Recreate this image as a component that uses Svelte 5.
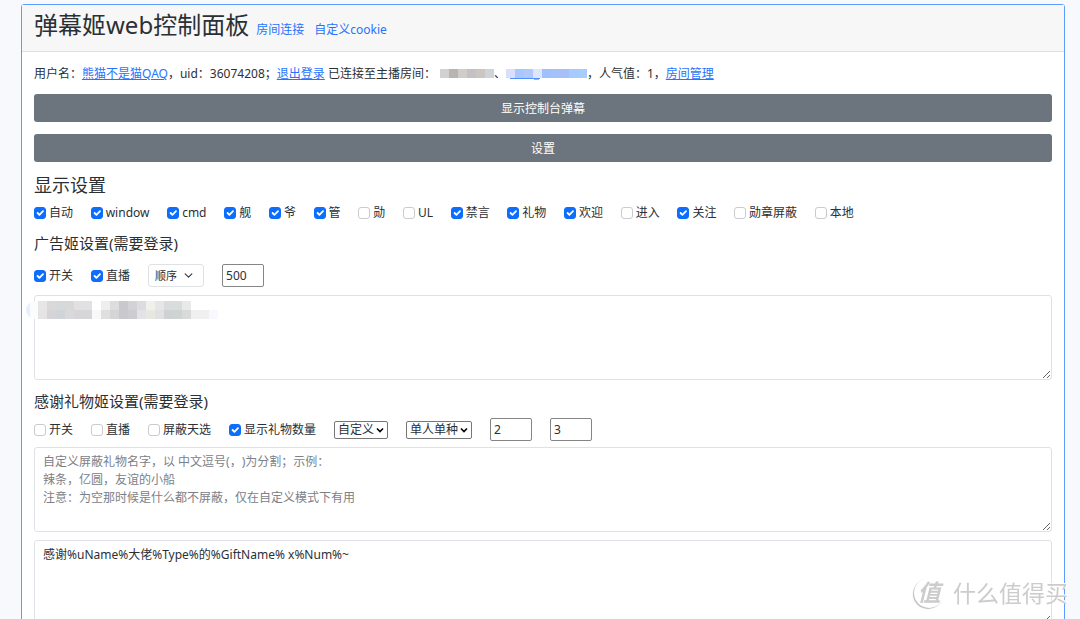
<script>
  const displayOptions = [
    { label: '自动', checked: true },
    { label: 'window', checked: true },
    { label: 'cmd', checked: true },
    { label: '舰', checked: true },
    { label: '爷', checked: true },
    { label: '管', checked: true },
    { label: '勋', checked: false },
    { label: 'UL', checked: false },
    { label: '禁言', checked: true },
    { label: '礼物', checked: true },
    { label: '欢迎', checked: true },
    { label: '进入', checked: false },
    { label: '关注', checked: true },
    { label: '勋章屏蔽', checked: false },
    { label: '本地', checked: false },
  ];

  const advertOptions = [
    { label: '开关', checked: true },
    { label: '直播', checked: true },
  ];

  const giftOptions = [
    { label: '开关', checked: false },
    { label: '直播', checked: false },
    { label: '屏蔽天选', checked: false },
    { label: '显示礼物数量', checked: true },
  ];

  // Masked texts, 9px cells, one array per row of cells
  const roomMask = [
    ['#d2d1d1', '#b8b4b2', '#cfccca', '#c3c1c3', '#ccc6c3', '#d0d3d8'],
  ];
  const hostMask = [
    ['#dcdffc', '#a9c6fd', '#b1c8fd', '#dde6fd', '#9fc0fd', '#a5c1fb', '#a6bffb', '#a6c9ff', '#a8ccff'],
  ];
  const advertMask = [
    ['#e6e6e7', '#dad8d9', '#d6d9da', '#d9d8d9', '#e2e1e2', '#e2e1e2', '#ffffff', '#efeeef', '#dddcde', '#cac8cc', '#d3d2d6', '#dcdce0', '#f0f0ec', '#e6e6e7', '#d9dbdc', '#d8dcdb', '#e8e9e9', '#ffffff', '#ffffff', '#ffffff'],
    ['#e5e4e5', '#d6d4d6', '#cfd4d7', '#d9d8da', '#d6d5d7', '#d6d5d7', '#f8f8f8', '#e0dfe0', '#d5d4d7', '#c9c8cc', '#cdccd3', '#e2e3e6', '#e8e8e2', '#e0e1e3', '#ced2d3', '#d0d3d3', '#d9dada', '#f0f0f0', '#f0f0f0', '#f8f9fe'],
  ];

  const blockPlaceholder = `自定义屏蔽礼物名字，以 中文逗号(，)为分割；示例：
辣条，亿圆，友谊的小船
注意：为空那时候是什么都不屏蔽，仅在自定义模式下有用`;

  let showConsole = $state(false);
  let showSettings = $state(true);
  let interval = $state('500');
  let giftDelay = $state('2');
  let giftCount = $state('3');
  let advertText = $state('');
  let blockedGifts = $state('');
  let thanksText = $state('感谢%uName%大佬%Type%的%GiftName% x%Num%~');
</script>

{#snippet checks(items)}
  {#each items as item}
    <label class="check">
      <input type="checkbox" bind:checked={item.checked} />
      <span>{item.label}</span>
    </label>
  {/each}
{/snippet}

{#snippet mask(rows, underline = false)}
  <svg
    class="mask"
    width={rows[0].length * 9}
    height={rows.length * 9}
    shape-rendering="crispEdges"
    aria-hidden="true"
  >
    {#each rows as row, y}
      {#each row as color, x}
        <rect x={x * 9} y={y * 9} width="9" height="9" fill={color} />
      {/each}
    {/each}
    {#if underline}
      <rect x="4" y="9" width="30" height="1" fill="#4d90fe" />
      <rect x="28" y="10" width="5" height="1" fill="#8db6fd" />
    {/if}
  </svg>
{/snippet}

<main class="card">
  <header class="card-header">
    <h1>弹幕姬web控制面板</h1>
    <nav>
      <a href="#room">房间连接</a>
      <a href="#cookie">自定义cookie</a>
    </nav>
  </header>

  <div class="card-body">
    <p class="status">
      用户名：<a href="#user">熊猫不是猫QAQ</a>，uid：36074208；<a href="#logout">退出登录</a>
      已连接至主播房间：<span class="masked-room">{@render mask(roomMask)}</span>、<a href="#host" aria-label="主播">{@render mask(hostMask, true)}</a>，人气值：1，<a href="#manage">房间管理</a>
    </p>

    <button type="button" class="bar" onclick={() => (showConsole = !showConsole)}>显示控制台弹幕</button>
    <button type="button" class="bar" onclick={() => (showSettings = !showSettings)}>设置</button>

    {#if showSettings}
      <h2>显示设置</h2>
      <div class="row display">
        {@render checks(displayOptions)}
      </div>

      <h3>广告姬设置(需要登录)</h3>
      <div class="row controls advert">
        {@render checks(advertOptions)}
        <select class="form-select" aria-label="发送顺序">
          <option>顺序</option>
          <option>随机</option>
        </select>
        <input class="number" type="text" aria-label="间隔" bind:value={interval} />
      </div>
      <div class="field">
        <textarea aria-label="广告内容" bind:value={advertText}></textarea>
        <div class="masked-text">{@render mask(advertMask)}</div>
      </div>

      <h3>感谢礼物姬设置(需要登录)</h3>
      <div class="row controls">
        {@render checks(giftOptions)}
        <select class="plain-select" aria-label="屏蔽模式">
          <option>自定义</option>
        </select>
        <select class="plain-select wide" aria-label="统计模式">
          <option>单人单种</option>
        </select>
        <input class="number" type="text" aria-label="延迟" bind:value={giftDelay} />
        <input class="number" type="text" aria-label="数量" bind:value={giftCount} />
      </div>
      <textarea aria-label="屏蔽礼物" placeholder={blockPlaceholder} bind:value={blockedGifts}></textarea>
      <textarea aria-label="感谢语" bind:value={thanksText}></textarea>
    {/if}
  </div>
</main>

<div class="watermark" aria-hidden="true">
  <span class="watermark-logo">值</span>
  <span>什么值得买</span>
</div>

<style>
  :global(html) {
    scrollbar-width: none;
  }

  :global(body) {
    background: #f8f9fc;
    color: #2b3035;
    font-family: 'Noto Sans', 'Noto Sans CJK SC', sans-serif;
    font-size: 12px;
    line-height: 18px;
    text-spacing-trim: space-all;
  }

  .card {
    margin: 4px 15px 12px 21px;
    background: #fff;
    border: 1px solid #5c9dff;
    border-radius: 3px;
  }

  .card-header {
    display: flex;
    align-items: baseline;
    gap: 7px;
    padding: 4px 12px 10px;
    background: #f7f7f7;
    border-bottom: 1px solid #dfdfdf;
  }

  .card-header nav {
    display: flex;
    gap: 10px;
  }

  .card-header a {
    text-decoration: none;
  }

  .card-body {
    padding: 12px;
  }

  a {
    color: #2673fd;
    text-underline-offset: 1px;
  }

  h1,
  h2,
  h3 {
    margin: 0;
    font-weight: 400;
  }

  h1 {
    font-size: 24px;
    line-height: 32px;
  }

  h2 {
    margin-bottom: 8px;
    font-size: 18px;
    line-height: 22px;
  }

  h3 {
    margin: 12px 0 8px;
    font-size: 15px;
    line-height: 18px;
  }

  .status {
    margin: 0;
    padding: 1px 0 11px;
  }

  .masked-room {
    margin-left: 4px;
  }

  .mask {
    overflow: visible;
    vertical-align: baseline;
  }

  .bar {
    display: block;
    width: 100%;
    height: 28px;
    margin-bottom: 12px;
    padding: 2px 0 0;
    border: 0;
    border-radius: 3px;
    background: #6c757d;
    color: #fff;
    font: inherit;
    cursor: pointer;
  }

  .row {
    display: flex;
    flex-wrap: wrap;
    align-items: center;
    gap: 0 18px;
  }

  .display {
    justify-content: space-between;
    gap: 0 8px;
    max-width: 820px;
  }

  .controls {
    min-height: 23px;
    margin-bottom: 6px;
  }

  .advert {
    margin: 12px 0 8px;
  }

  .check {
    display: flex;
    align-items: center;
    gap: 3px;
  }

  .check input {
    width: 12px;
    height: 12px;
    margin: 0;
    appearance: none;
    border: 1px solid #c9cbce;
    border-radius: 3px;
    background: #fff;
  }

  .check input:checked {
    border-color: #0d6efd;
    background: #0d6efd url("data:image/svg+xml,%3csvg xmlns='http://www.w3.org/2000/svg' viewBox='0 0 20 20'%3e%3cpath fill='none' stroke='%23fff' stroke-linecap='round' stroke-linejoin='round' stroke-width='3' d='m6 10 3 3 6-6'/%3e%3c/svg%3e") center / 12px no-repeat;
  }

  .number {
    box-sizing: border-box;
    width: 42px;
    height: 23px;
    padding: 0 3px;
    border: 1px solid #858585;
    border-radius: 2px;
    background: #fff;
    color: #2b3035;
    font: inherit;
  }

  .form-select {
    box-sizing: border-box;
    width: 56px;
    height: 23px;
    padding: 0 6px;
    appearance: none;
    border: 1px solid #dee2e6;
    border-radius: 3px;
    background: #fff url("data:image/svg+xml,%3csvg xmlns='http://www.w3.org/2000/svg' viewBox='0 0 16 16'%3e%3cpath fill='none' stroke='%23343a40' stroke-linecap='round' stroke-linejoin='round' stroke-width='2' d='m2 5 6 6 6-6'/%3e%3c/svg%3e") right 10px center / 9px no-repeat;
    color: #2b3035;
    font: inherit;
    font-size: 11px;
  }

  .plain-select {
    box-sizing: border-box;
    width: 54px;
    height: 18px;
    padding: 0 3px;
    appearance: none;
    border: 1px solid #767676;
    border-radius: 2px;
    background: #fff url("data:image/svg+xml,%3csvg xmlns='http://www.w3.org/2000/svg' viewBox='0 0 8 8'%3e%3cpath fill='none' stroke='%23000' stroke-width='1.6' d='m1 2.5 3 3 3-3'/%3e%3c/svg%3e") right 3px center / 8px no-repeat;
    color: #2b3035;
    font: inherit;
    line-height: 16px;
  }

  .wide {
    width: 66px;
  }

  textarea {
    display: block;
    box-sizing: border-box;
    width: 100%;
    height: 85px;
    margin-bottom: 8px;
    padding: 5px 8px;
    border: 1px solid #dee2e6;
    border-radius: 3px;
    background: #fff;
    color: #2b3035;
    font: inherit;
    resize: vertical;
  }

  textarea::placeholder {
    color: #7b8188;
  }

  .field {
    position: relative;
  }

  .masked-text {
    position: absolute;
    top: 6px;
    left: -8px;
    padding-left: 12px;
    border-radius: 9px 0 0 9px;
    background: linear-gradient(90deg, #e6effe 4px, #fbfdfc 4px);
    line-height: 0;
  }

  .watermark {
    position: fixed;
    right: 12px;
    bottom: 10px;
    display: flex;
    align-items: center;
    gap: 9px;
    color: #ccc;
    font-size: 23px;
    line-height: 32px;
    text-shadow: 1px -1px 0 #fff;
    pointer-events: none;
  }

  .watermark-logo {
    width: 30px;
    height: 30px;
    border-radius: 50%;
    box-shadow: -1px 1px 1px #bbb;
    font-style: italic;
    font-weight: 700;
    line-height: 28px;
    text-align: center;
  }
</style>
